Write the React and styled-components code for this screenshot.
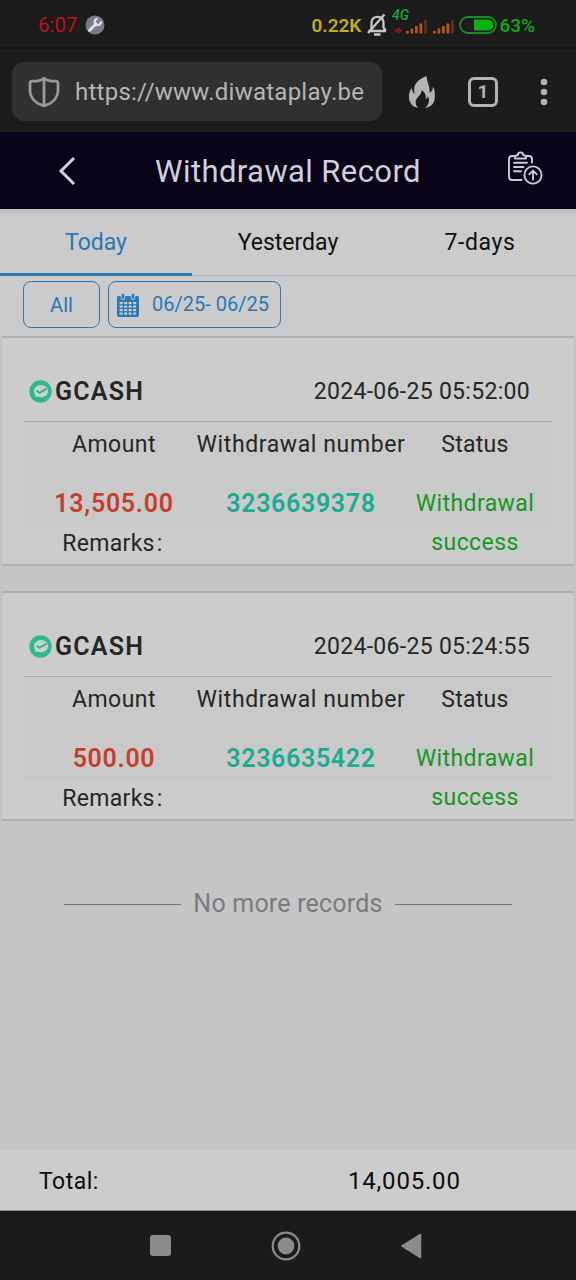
import React from "react";
import styled, { createGlobalStyle } from "styled-components";

const Global = createGlobalStyle`
  * { box-sizing: border-box; }
  body { margin: 0; background: #1b1b1b; }
`;

const Screen = styled.div`
  width: 576px;
  height: 1280px;
  display: flex;
  flex-direction: column;
  overflow: hidden;
  background: #c5c5c7;
  color: #262626;
  font-family: Roboto, "Liberation Sans", sans-serif;
`;

const Label = styled.span`
  font-size: ${(p) => p.$size || 23}px;
  font-weight: ${(p) => p.$weight || 400};
  letter-spacing: ${(p) => p.$track || 0}px;
  line-height: ${(p) => p.$line || 39}px;
  color: ${(p) => p.$color || "inherit"};
  white-space: nowrap;
`;

const StatusBar = styled.header`
  height: 49px;
  flex: none;
  display: flex;
  align-items: center;
  justify-content: space-between;
  padding: 0 41px 0 38px;
  background: #1c1c1c;
  border-bottom: 2px solid #131313;
`;

const StatusGroup = styled.div`
  display: flex;
  align-items: center;
  gap: ${(p) => p.$gap}px;
  padding-top: 3px;
`;

const BatteryStatus = styled.div`
  display: flex;
  align-items: center;
  gap: 2px;
`;

const BrowserBar = styled.div`
  height: 83px;
  flex: none;
  display: flex;
  align-items: center;
  padding: 2px 28px 0 12px;
  background: #1c1c1c;
`;

const AddressBox = styled.div`
  width: 370px;
  height: 59px;
  display: flex;
  align-items: center;
  padding: 1px 16px 0 16px;
  gap: 15px;
  border-radius: 12px;
  background: #303030;
`;

const Address = styled(Label)`
  flex: 1;
  overflow: hidden;
`;

const BrowserActions = styled.div`
  flex: 1;
  display: flex;
  align-items: center;
  justify-content: space-between;
  padding-left: 27px;
`;

const TabCount = styled.div`
  width: 30px;
  height: 30px;
  margin-right: 9px;
  border: 3px solid #b3b3b3;
  border-radius: 6px;
  display: flex;
  align-items: center;
  justify-content: center;
  color: #b3b3b3;
`;

const TitleBar = styled.div`
  height: 77px;
  flex: none;
  display: grid;
  grid-template-columns: 134px 1fr 134px;
  align-items: center;
  background: #090417;
  color: #d2cedb;
  text-align: center;
`;

const TitleSlot = styled.div`
  display: flex;
  justify-content: center;
  padding-left: ${(p) => p.$shift || 0}px;
  padding-bottom: ${(p) => p.$lift || 0}px;
`;

const Title = styled(Label)`
  padding-top: 2px;
`;

const Tabs = styled.nav`
  height: 67px;
  flex: none;
  display: grid;
  grid-template-columns: repeat(3, 1fr);
  background: linear-gradient(#bdbdbd, #cbcbcb 8px);
`;

const Tab = styled.button`
  border: 0;
  padding: 2px 0 0;
  background: none;
  font: inherit;
  color: ${(p) => (p.$active ? "#2a77b2" : "#101010")};
  border-bottom: ${(p) => (p.$active ? "3px solid #2a77b2" : "1px solid #b5b5b5")};
  padding-bottom: ${(p) => (p.$active ? 0 : 2)}px;
`;

const Filters = styled.div`
  height: 60px;
  flex: none;
  display: flex;
  gap: 8px;
  padding: 5px 23px 0;
  background: #cbcbcb;
`;

const FilterButton = styled.button`
  width: ${(p) => p.$width}px;
  height: 47px;
  display: flex;
  align-items: center;
  justify-content: center;
  gap: 13px;
  padding: ${(p) => p.$pad || "2px 0 0"};
  font: inherit;
  color: #2a77b2;
  background: none;
  border: 1.5px solid #3079ad;
  border-radius: 8px;
`;

const Card = styled.section`
  height: 230px;
  flex: none;
  margin: ${(p) => (p.$first ? 0 : 25)}px 1px 0;
  padding: 0 22px;
  background: #cccccc;
  border: solid;
  border-width: 2px 1px;
  border-color: #afafaf #bbb;
  border-radius: 2px;
`;

const CardHead = styled.div`
  height: 84px;
  display: flex;
  align-items: center;
  justify-content: space-between;
  padding: 23px 22px 0 5px;
  border-bottom: 1px solid #aaa;
`;

const Method = styled.div`
  display: flex;
  align-items: center;
  gap: 3px;
`;

const Details = styled.div`
  display: grid;
  grid-template-columns: 180px 194px 154px;
  grid-template-rows: 44px 18px 40px 38px;
  justify-items: center;
  background: linear-gradient(#c9c9c9, #c9c9c9) 0 0 / 100% 105px no-repeat;
`;

const Value = styled(Label)`
  grid-row: 3;
`;

const StatusValue = styled(Label)`
  grid-row: 3 / span 2;
  grid-column: 3;
  white-space: normal;
  width: 130px;
  text-align: center;
`;

const Remarks = styled(Label)`
  grid-row: 4;
  grid-column: 1;
  display: flex;
  gap: 2px;
  margin-right: 3px;
`;

const EndNote = styled.div`
  flex: 1;
  display: flex;
  align-items: flex-start;
  justify-content: center;
  gap: 12px;
  padding-top: 63px;
`;

const Rule = styled.hr`
  width: 117px;
  margin: 20px 0 0;
  border: 0;
  border-top: 1px solid #777;
`;

const TotalBar = styled.footer`
  height: 61px;
  flex: none;
  display: grid;
  grid-template-columns: 309px 1fr;
  align-items: center;
  padding: 3px 0 0 39px;
  background: #cccccc;
  color: #0c0c0c;
  border-bottom: 1px solid #8c8c8c;
`;

const SystemNav = styled.div`
  height: 69px;
  flex: none;
  display: flex;
  align-items: center;
  justify-content: center;
  gap: 100px;
  padding-right: 5px;
  background: #1b1b1b;
`;

const WrenchIcon = () => (
  <svg width="20" height="20" viewBox="0 0 20 20">
    <circle cx="10" cy="10" r="9.5" fill="#777b87" />
    <path d="M4.5 15.5 L11.2 8.8" stroke="#e2e2e6" strokeWidth="2.8" strokeLinecap="round" />
    <path d="M15.9 6.2 A3.2 3.2 0 1 1 12.7 3.7" fill="none" stroke="#e2e2e6" strokeWidth="2.3" />
  </svg>
);

const MutedBellIcon = () => (
  <svg width="22" height="24" viewBox="0 0 22 24" fill="none" stroke="#c6c6c6" strokeWidth="2.3">
    <path d="M2.5 18 H20 M5.5 17 V10 C5.5 6 8 3.8 11.5 3.8 C15 3.8 17.5 6 17.5 10 V14.5 L19.8 18" />
    <path d="M18.5 1.5 L2 20" />
    <path d="M8 21.5 H14.5" strokeWidth="2.5" />
  </svg>
);

const SignalIcon = ({ network }) => (
  <svg width={network ? 36 : 22} height="34" viewBox={network ? "0 -4 36 34" : "14 -4 22 34"}>
    {network && (
      <>
        <text x="0" y="8" fontSize="14" fontStyle="italic" fontWeight="500" fill="#18a53a">4G</text>
        <path d="M3 18.5 H10 M6.5 15.5 V21.5" stroke="#9c1826" strokeWidth="2" />
      </>
    )}
    {[0, 1, 2, 3].map((i) => (
      <rect key={i} x={14 + i * 4.5} y={19 - i * 2.5} width="2.8" height={2.5 + i * 2.5} fill="#b45420" />
    ))}
    <rect x="32.2" y="8" width="2.6" height="13.5" fill="#643018" />
  </svg>
);

const BatteryIcon = () => (
  <svg width="38" height="18" viewBox="0 0 38 18">
    <rect x="1" y="1" width="36" height="16" rx="8" fill="none" stroke="#168d29" strokeWidth="1.8" />
    <path d="M15 3.5 H29 A5.5 5.5 0 0 1 29 14.5 H15Z" fill="#08b30d" />
  </svg>
);

const ShieldIcon = () => (
  <svg width="32" height="32" viewBox="0 0 32 32" fill="none" stroke="#999" strokeWidth="2.8" strokeLinejoin="round">
    <path d="M16 2.2 C13.5 4.6 10.5 5.3 4 5.2 Q2 5.2 2 7.2 V14 C2 22 8 27.5 16 29.8 C24 27.5 30 22 30 14 V7.2 Q30 5.2 28 5.2 C21.5 5.3 18.5 4.6 16 2.2Z M16 2.5 V29.5" />
  </svg>
);

const FlameIcon = () => (
  <svg width="26" height="32" viewBox="0 0 74 92" fill="#b3b3b3">
    <path d="M50 0 C20 12 10 28 16 52 C10 48 8 40 8 34 C-4 50 -4 72 10 85 C14 89 20 91 26 92 C14 78 18 66 30 56 C34 50 36 46 36 40 C46 46 50 56 47 67 C52 65 54 61 54 57 C60 70 57 82 46 92 C66 88 75 76 74 56 C74 46 73 38 69 30 C68 40 64 46 59 48 C60 30 52 20 50 0Z" />
  </svg>
);

const MoreIcon = () => (
  <svg width="8" height="28" viewBox="0 0 8 28" fill="#b3b3b3">
    {[4, 14, 24].map((y) => <circle key={y} cx="4" cy={y} r="3.3" />)}
  </svg>
);

const BackIcon = () => (
  <svg width="18" height="30" viewBox="0 0 18 30" fill="none" stroke="#d2cedb" strokeWidth="3">
    <path d="M16 2 L3 15 L16 28" />
  </svg>
);

const ReportIcon = () => (
  <svg width="35" height="34" viewBox="0 0 35 34" fill="none" stroke="#cfcad8" strokeWidth="1.9" strokeLinecap="round" strokeLinejoin="round">
    <path d="M6 5 H4 C2 5 1 6 1 8 V26 C1 28 2 29 4 29 H13.5 M18 5 H21 C23 5 24 6 24 8 V11.5" />
    <path d="M7 7.5 V5 L10 3.8 C10 0.5 15 0.5 15 3.8 L18 5 V7.5Z" />
    <path d="M6 11.8 H19 M6 16 H15.5 M6 20.2 H13" />
    <circle cx="25" cy="24" r="8.6" />
    <path d="M25 28.5 V20 M21.2 23.4 L25 19.6 L28.8 23.4" />
  </svg>
);

const CalendarIcon = () => (
  <svg width="22" height="24" viewBox="0 0 22 24">
    <path d="M1.5 3 H20.5 Q22 3 22 4.5 V22 Q22 24 20 24 H2 Q0 24 0 22 V4.5 Q0 3 1.5 3Z" fill="#2a77b2" />
    {[6, 16].map((x) => (
      <rect key={x} x={x - 1.8} y="0" width="3.6" height="6.6" rx="1.8" fill="#2a77b2" stroke="#cbcbcb" strokeWidth="1" />
    ))}
    {[0, 1, 2, 3].map((row) =>
      [0, 1, 2, 3].map((col) => (
        <rect key={`${row}-${col}`} x={2.6 + col * 4.5} y={9 + row * 3.5} width="3.1" height="2.2" fill="#cbcbcb" />
      ))
    )}
  </svg>
);

const PaidIcon = () => (
  <svg width="23" height="23" viewBox="0 0 23 23">
    <circle cx="11.5" cy="11.5" r="11.2" fill="#2fb98d" />
    <ellipse cx="12" cy="11.2" rx="7" ry="6.2" fill="#c5d3cd" />
    <path d="M6.3 17 L6 13 L10 16.5Z" fill="#c5d3cd" />
    <path d="M7.5 10.8 L10.5 12.8 L17.5 8.8" fill="none" stroke="#35a985" strokeWidth="1.8" />
  </svg>
);

const RecentsIcon = () => (
  <svg width="21" height="21" viewBox="0 0 21 21"><rect width="21" height="21" rx="3" fill="#8b8b8b" /></svg>
);

const HomeIcon = () => (
  <svg width="30" height="30" viewBox="0 0 30 30">
    <circle cx="15" cy="15" r="13.3" fill="none" stroke="#8b8b8b" strokeWidth="2.2" />
    <circle cx="15" cy="15" r="8.4" fill="#8b8b8b" />
  </svg>
);

const ReturnIcon = () => (
  <svg width="21" height="26" viewBox="0 0 21 26">
    <path d="M1 13 L19.5 1.5 V24.5Z" fill="#8b8b8b" stroke="#8b8b8b" strokeWidth="1.5" strokeLinejoin="round" />
  </svg>
);

const records = [
  { time: "2024-06-25 05:52:00", amount: "13,505.00", number: "3236639378" },
  { time: "2024-06-25 05:24:55", amount: "500.00", number: "3236635422" },
];

const RecordCard = ({ record, first }) => (
  <Card $first={first}>
    <CardHead>
      <Method>
        <PaidIcon />
        <Label $size={25} $weight={600} $track={1.2}>GCASH</Label>
      </Method>
      <Label $track={0.3}>{record.time}</Label>
    </CardHead>
    <Details>
      <Label $track={0.5} $line={45}>Amount</Label>
      <Label $track={0.6} $line={45}>Withdrawal number</Label>
      <Label $track={0.3} $line={45}>Status</Label>
      <Value $size={25} $weight={600} $track={0.7} $line={40} $color="#c63f2d">{record.amount}</Value>
      <Value $size={25} $weight={600} $track={0.65} $line={40} $color="#18ad90">{record.number}</Value>
      <StatusValue $track={0.4} $color="#179626">Withdrawal success</StatusValue>
      <Remarks $track={0.3}>Remarks<span>:</span></Remarks>
    </Details>
  </Card>
);

export default function App() {
  return (
    <Screen>
      <Global />
      <StatusBar>
        <StatusGroup $gap={7}>
          <Label $size={20.5} $color="#b8121c">6:07</Label>
          <WrenchIcon />
        </StatusGroup>
        <StatusGroup $gap={4.5}>
          <Label $size={19} $weight={600} $color="#c0ad22">0.22K</Label>
          <MutedBellIcon />
          <SignalIcon network />
          <SignalIcon />
          <BatteryStatus>
            <BatteryIcon />
            <Label $size={19} $weight={500} $color="#12a81d">63%</Label>
          </BatteryStatus>
        </StatusGroup>
      </StatusBar>
      <BrowserBar>
        <AddressBox>
          <ShieldIcon />
          <Address $size={24} $track={0.25} $color="#b5b5b5">https://www.diwataplay.be</Address>
        </AddressBox>
        <BrowserActions>
          <FlameIcon />
          <TabCount><Label $size={19} $weight={700} $line={24}>1</Label></TabCount>
          <MoreIcon />
        </BrowserActions>
      </BrowserBar>
      <TitleBar>
        <TitleSlot><BackIcon /></TitleSlot>
        <Title $size={31} $track={0.4}>Withdrawal Record</Title>
        <TitleSlot $shift={32} $lift={5}><ReportIcon /></TitleSlot>
      </TitleBar>
      <Tabs>
        <Tab $active><Label>Today</Label></Tab>
        <Tab><Label>Yesterday</Label></Tab>
        <Tab><Label $track={0.6}>7-days</Label></Tab>
      </Tabs>
      <Filters>
        <FilterButton $width={77}><Label $size={20}>All</Label></FilterButton>
        <FilterButton $width={173} $pad="0 3px 0 0">
          <CalendarIcon />
          <Label $size={20}>06/25- 06/25</Label>
        </FilterButton>
      </Filters>
      {records.map((record, i) => (
        <RecordCard key={record.number} record={record} first={i === 0} />
      ))}
      <EndNote>
        <Rule />
        <Label $size={25} $track={0.2} $color="#7b7b7c">No more records</Label>
        <Rule />
      </EndNote>
      <TotalBar>
        <Label $track={0.5}>Total:</Label>
        <Label $size={24} $track={0.8}>14,005.00</Label>
      </TotalBar>
      <SystemNav>
        <RecentsIcon />
        <HomeIcon />
        <ReturnIcon />
      </SystemNav>
    </Screen>
  );
}
